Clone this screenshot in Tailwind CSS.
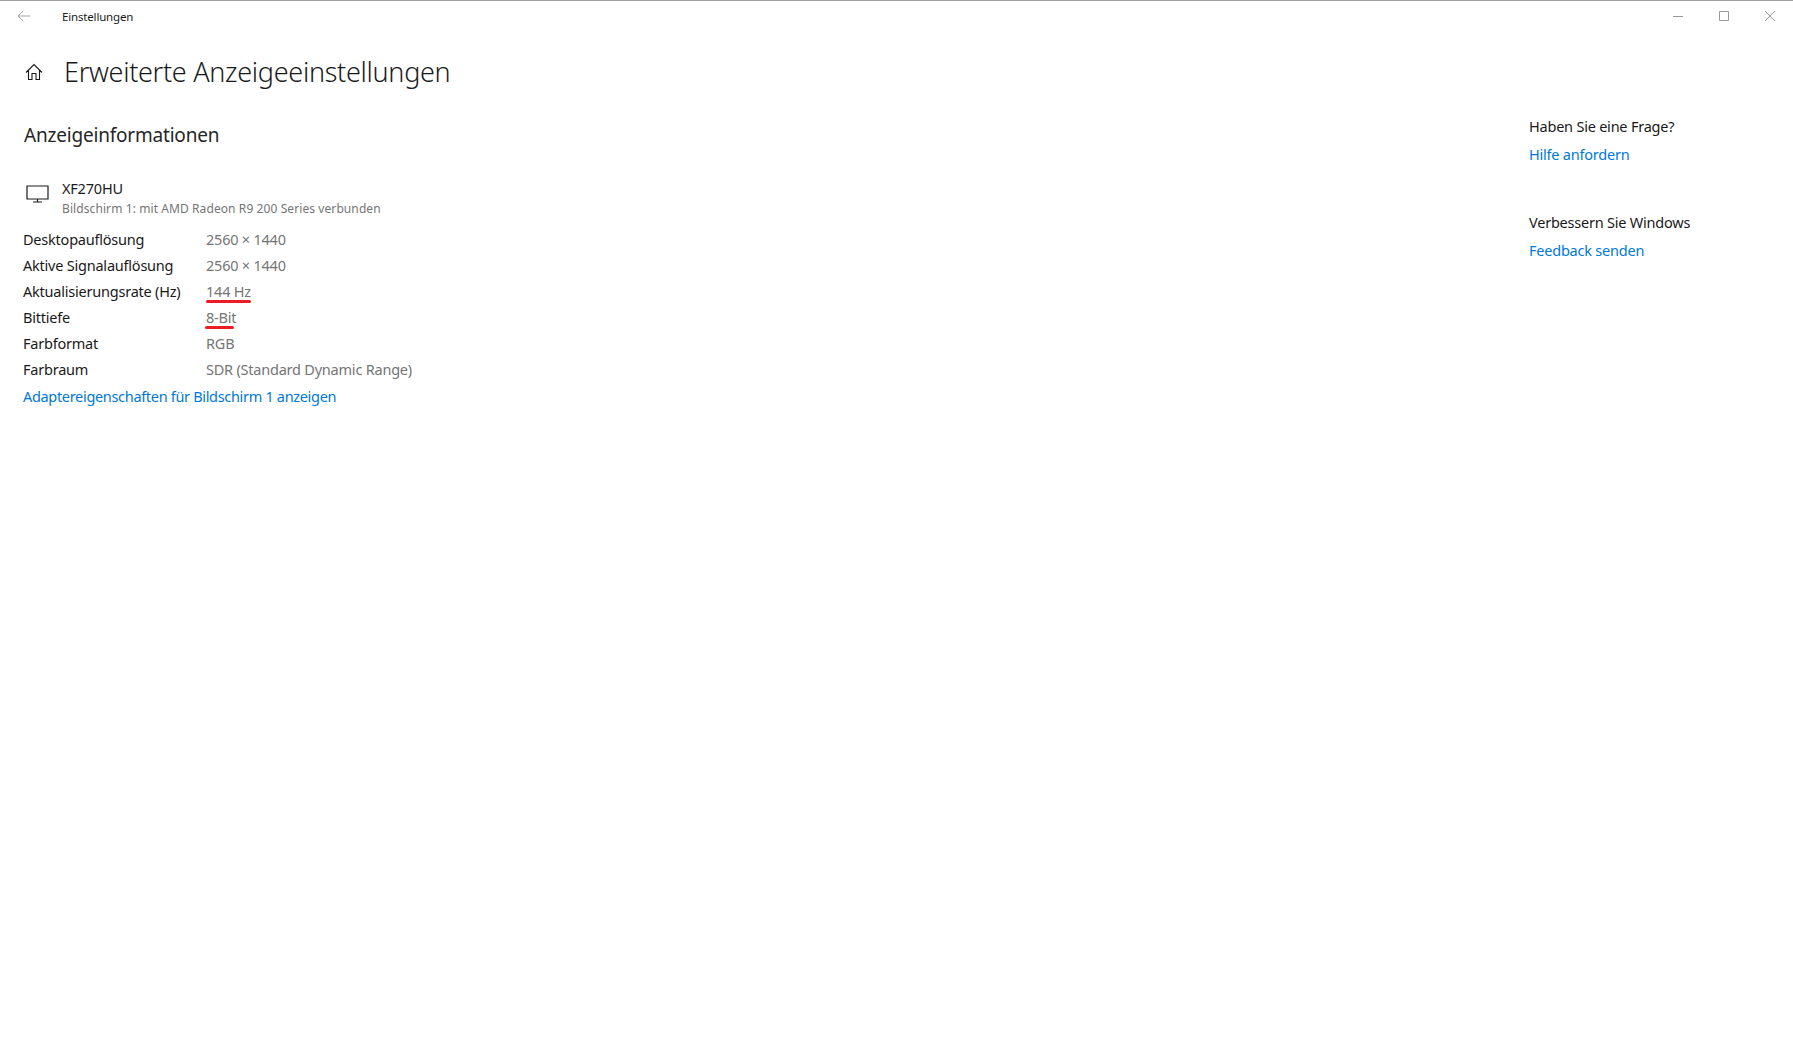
<!DOCTYPE html>
<html lang="de">
<head>
<meta charset="utf-8">
<title>Einstellungen</title>
<script src="https://cdn.jsdelivr.net/npm/@tailwindcss/browser@4"></script>
</head>
<body class="bg-white font-['Noto_Sans',sans-serif] text-[#1a1a1a] overflow-hidden">
<div class="w-[1793px] h-[1039px] flex flex-col border-t border-[#a0a0a0]">
    <!-- title bar -->
    <div class="flex items-center h-[30px] shrink-0">
        <div class="w-[62px] pl-[17px]">
            <svg width="14" height="12" viewBox="0 0 14 12" fill="none" stroke="#a3a3a3" stroke-width="1"><path d="M13 6H1M6.5 .8 1 6l5.5 5.2"/></svg>
        </div>
        <span class="text-[11.5px] tracking-[-0.17px] mt-[1px]">Einstellungen</span>
        <div class="ml-auto flex items-center gap-[34px] pr-[17px]">
            <svg width="12" height="12" viewBox="0 0 12 12" stroke="#9a9a9a" fill="none"><path d="M1 6.5h10"/></svg>
            <svg width="12" height="12" viewBox="0 0 12 12" stroke="#9a9a9a" fill="none"><path d="M1.5 1.5h9v9h-9z"/></svg>
            <svg width="12" height="12" viewBox="0 0 12 12" stroke="#9a9a9a" fill="none"><path d="M1 1l10 10M11 1 1 11"/></svg>
        </div>
    </div>

    <div class="flex flex-1">
        <!-- main -->
        <div class="flex-1 pl-[23px]">
            <div class="flex items-center h-[42px] mt-[20px]">
                <svg class="ml-[2px]" width="18" height="18" viewBox="0 0 18 18" fill="none" stroke="#1a1a1a" stroke-width="1.1"><path d="M1 9.5 9 1.5l8 8M3.5 7.5V16.5H7V10.5H11V16.5H14.5V7.5"/></svg>
                <h1 class="ml-[21px] text-[27px] font-light tracking-[-0.3px]">Erweiterte Anzeigeeinstellungen</h1>
            </div>
            <h2 class="mt-[27px] ml-[1px] text-[19px] leading-[30px] tracking-[-0.2px] text-[#262626]">Anzeigeinformationen</h2>

            <div class="flex mt-[27px] items-start">
                <svg class="mt-[8px] ml-[3px]" width="24" height="18" viewBox="0 0 24 18" fill="none" stroke="#1a1a1a" stroke-width="1.2"><path d="M1 1h21v13H1zM11.5 14v3M7 17h9"/></svg>
                <div class="ml-[12px]">
                    <div class="text-[14.5px] leading-[23px] tracking-[-0.2px]">XF270HU</div>
                    <div class="text-[12px] leading-[18px] tracking-[0.09px] text-[#757575]">Bildschirm 1: mit AMD Radeon R9 200 Series verbunden</div>
                </div>
            </div>

            <div class="mt-[9px] grid grid-cols-[183px_1fr] auto-rows-[26px] items-center text-[14.5px] tracking-[-0.22px]">
                <div>Desktopauflösung</div><div class="text-[#757575]">2560 × 1440</div>
                <div>Aktive Signalauflösung</div><div class="text-[#757575]">2560 × 1440</div>
                <div>Aktualisierungsrate (Hz)</div><div class="text-[#757575]"><span class="relative">144 Hz<span class="absolute left-0 w-[45px] top-[19px] h-[3px] rounded-full bg-[#ed1c24]"></span></span></div>
                <div>Bittiefe</div><div class="text-[#757575]"><span class="relative">8-Bit<span class="absolute left-[-1px] w-[29px] top-[19px] h-[3px] rounded-full bg-[#ed1c24]"></span></span></div>
                <div>Farbformat</div><div class="text-[#757575]">RGB</div>
                <div>Farbraum</div><div class="text-[#757575]">SDR (Standard Dynamic Range)</div>
            </div>
            <a class="block leading-[26px] text-[14.5px] tracking-[-0.32px] text-[#0078d7]">Adaptereigenschaften für Bildschirm 1 anzeigen</a>
        </div>

        <!-- side -->
        <div class="w-[264px] shrink-0 pt-[81px] text-[14.5px] tracking-[-0.22px]">
            <div class="leading-[28px]">Haben Sie eine Frage?</div>
            <a class="block leading-[28px] text-[#0078d7]">Hilfe anfordern</a>
            <div class="mt-[40px] leading-[28px]">Verbessern Sie Windows</div>
            <a class="block leading-[28px] text-[#0078d7]">Feedback senden</a>
        </div>
    </div>
</div>
</body>
</html>
